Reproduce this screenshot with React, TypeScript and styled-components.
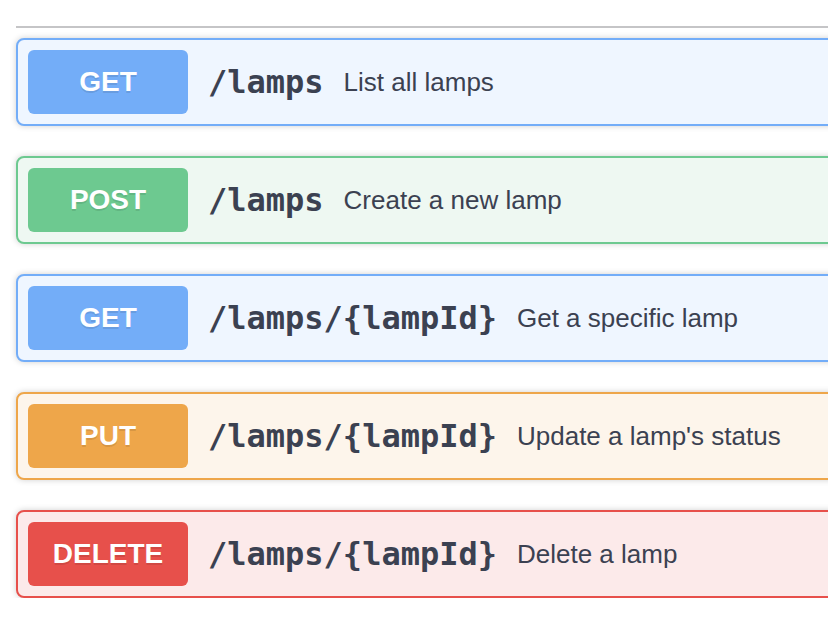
import React from "react";
import styled, { createGlobalStyle } from "styled-components";

const Global = createGlobalStyle`
  html, body { margin: 0; padding: 0; background: #ffffff; overflow: hidden; }
  body { font-family: "Liberation Sans", Arial, sans-serif; }
`;

type Method = "get" | "post" | "put" | "delete";

const palette: Record<Method, { main: string; bg: string }> = {
  get: { main: "#73adf8", bg: "#eff6ff" },
  post: { main: "#6dc990", bg: "#eef8f2" },
  put: { main: "#eea64a", bg: "#fdf5eb" },
  delete: { main: "#e7504b", bg: "#fceaea" },
};

const Page = styled.div`
  width: 1000px;
  padding: 26px 0 0 16px;
`;

const Divider = styled.div`
  height: 2px;
  background: #c5c5c7;
  margin-bottom: 10px;
`;

const List = styled.div`
  display: flex;
  flex-direction: column;
  gap: 30px;
`;

const Block = styled.div<{ $m: Method }>`
  display: flex;
  align-items: center;
  padding: 10px;
  border: 2px solid ${(p) => palette[p.$m].main};
  background: ${(p) => palette[p.$m].bg};
  border-radius: 8px;
  box-shadow: 0 0 6px rgba(0, 0, 0, 0.19);
`;

const Badge = styled.div<{ $m: Method }>`
  flex: 0 0 160px;
  height: 64px;
  display: flex;
  align-items: center;
  justify-content: center;
  background: ${(p) => palette[p.$m].main};
  border-radius: 6px;
  color: #ffffff;
  font-family: "Liberation Sans", Arial, sans-serif;
  font-weight: 700;
  font-size: 28px;
  text-shadow: 0 2px 0 rgba(0, 0, 0, 0.1);
`;

const Path = styled.span`
  padding: 0 20px;
  font-family: "DejaVu Sans Mono", monospace;
  font-weight: 700;
  font-size: 32px;
  color: #3b4151;
`;

const Desc = styled.span`
  font-family: "Liberation Sans", Arial, sans-serif;
  font-size: 26px;
  color: #3b4151;
`;

const ops: { m: Method; path: string; desc: string }[] = [
  { m: "get", path: "/lamps", desc: "List all lamps" },
  { m: "post", path: "/lamps", desc: "Create a new lamp" },
  { m: "get", path: "/lamps/{lampId}", desc: "Get a specific lamp" },
  { m: "put", path: "/lamps/{lampId}", desc: "Update a lamp's status" },
  { m: "delete", path: "/lamps/{lampId}", desc: "Delete a lamp" },
];

export default function App() {
  return (
    <>
      <Global />
      <Page>
        <Divider />
        <List>
          {ops.map((o, i) => (
            <Block key={i} $m={o.m}>
              <Badge $m={o.m}>{o.m.toUpperCase()}</Badge>
              <Path>{o.path}</Path>
              <Desc>{o.desc}</Desc>
            </Block>
          ))}
        </List>
      </Page>
    </>
  );
}
